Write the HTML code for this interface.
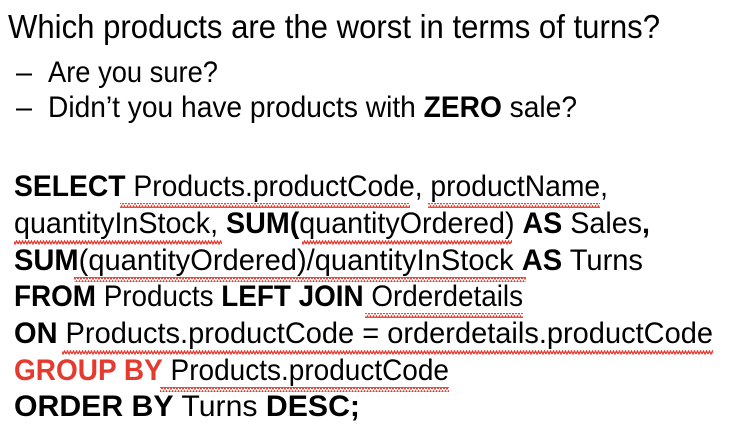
<!DOCTYPE html>
<html><head><meta charset="utf-8"><style>
html,body{margin:0;padding:0;background:#fff;width:744px;height:440px;overflow:hidden}
svg{display:block}
text{font-family:"Liberation Sans",sans-serif;fill:#000}
.b{font-weight:bold}
</style></head><body>
<svg width="744" height="440" viewBox="0 0 744 440">
<defs>
<pattern id="w" width="6" height="5" patternUnits="userSpaceOnUse">
<path d="M0 4 L1.5 1 L3 4 L4.5 1 L6 4" fill="none" stroke="#e53a2e" stroke-width="1.3"/>
</pattern>
</defs>
<text x="8" y="38" font-size="33" textLength="652" lengthAdjust="spacingAndGlyphs">Which products are the worst in terms of turns?</text>
<text x="16" y="82" font-size="30" textLength="16" lengthAdjust="spacingAndGlyphs">–</text>
<text x="48" y="82" font-size="30" textLength="170" lengthAdjust="spacingAndGlyphs">Are you sure?</text>
<text x="16" y="117" font-size="30" textLength="16" lengthAdjust="spacingAndGlyphs">–</text>
<text x="48" y="117" font-size="30" textLength="529" lengthAdjust="spacingAndGlyphs">Didn’t you have products with <tspan class="b">ZERO</tspan> sale?</text>

<g font-size="30">
<text x="14" y="196" textLength="594" lengthAdjust="spacingAndGlyphs"><tspan class="b">SELECT</tspan> Products.productCode, productName,</text>
<text x="14" y="233" textLength="636" lengthAdjust="spacingAndGlyphs">quantityInStock, <tspan class="b">SUM(</tspan>quantityOrdered) <tspan class="b">AS</tspan> Sales<tspan class="b">,</tspan></text>
<text x="14" y="270" textLength="629" lengthAdjust="spacingAndGlyphs"><tspan class="b">SUM</tspan>(quantityOrdered)/quantityInStock <tspan class="b">AS</tspan> Turns</text>
<text x="14" y="306" textLength="509" lengthAdjust="spacingAndGlyphs"><tspan class="b">FROM</tspan> Products <tspan class="b">LEFT JOIN</tspan> Orderdetails</text>
<text x="14" y="343" textLength="699" lengthAdjust="spacingAndGlyphs"><tspan class="b">ON</tspan> Products.productCode = orderdetails.productCode</text>
<text x="14" y="380" textLength="435" lengthAdjust="spacingAndGlyphs"><tspan class="b" style="fill:#e53a2e">GROUP BY</tspan> Products.productCode</text>
<text x="14" y="416" textLength="346" lengthAdjust="spacingAndGlyphs"><tspan class="b">ORDER BY</tspan> Turns <tspan class="b">DESC;</tspan></text>
</g>
<g fill="url(#w)">
<rect x="120" y="203" width="290" height="5"/>
<rect x="428" y="203" width="172" height="5"/>
<rect x="14" y="240" width="208" height="5"/>
<rect x="302" y="240" width="210" height="5"/>
<rect x="74" y="277" width="452" height="5"/>
<rect x="365" y="313" width="158" height="5"/>
<rect x="62" y="350" width="651" height="5"/>
<rect x="160" y="387" width="289" height="5"/>
</g>
</svg>
</body></html>
